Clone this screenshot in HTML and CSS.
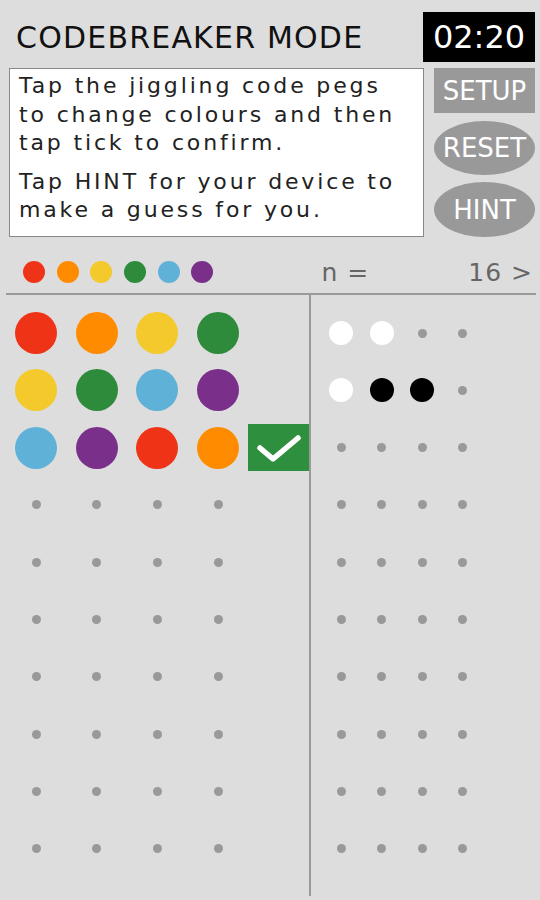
FILE: index.html
```html
<!DOCTYPE html>
<html lang="en">
<head>
    <meta charset="UTF-8">
    <meta name="viewport" content="width=device-width, initial-scale=1.0">
    <title>Codebreaker Mode</title>
    <link rel="stylesheet" href="styles.css">
</head>
<body>
    <div class="header">
        <h1 class="title">CODEBREAKER MODE</h1>
        <div class="timer">02:20</div>
    </div>

    <div class="info-row">
        <div class="info">
            <p>Tap the jiggling code pegs<br>to change colours and then<br>tap tick to confirm.</p>
            <p>Tap HINT for your device to<br>make a guess for you.</p>
        </div>
        <div class="buttons">
            <div class="btn setup">SETUP</div>
            <div class="btn oval reset">RESET</div>
            <div class="btn oval hint">HINT</div>
        </div>
    </div>

    <div class="palette-row">
        <div class="palette">
            <span class="dot r"></span>
            <span class="dot o"></span>
            <span class="dot y"></span>
            <span class="dot g"></span>
            <span class="dot b"></span>
            <span class="dot p"></span>
        </div>
        <span class="n-label">n =</span>
        <span class="n-value">16 &gt;</span>
    </div>

    <div class="divider"></div>

    <div class="board">
        <div class="guesses">
            <div class="grow"><span class="peg r"></span><span class="peg o"></span><span class="peg y"></span><span class="peg g"></span></div>
            <div class="grow"><span class="peg y"></span><span class="peg g"></span><span class="peg b"></span><span class="peg p"></span></div>
            <div class="grow">
                <span class="peg b"></span><span class="peg p"></span><span class="peg r"></span><span class="peg o"></span>
                <span class="tick">
                    <svg width="61" height="47" viewBox="0 0 61 47">
                        <polyline points="12,24 25,35 50,14" fill="none" stroke="#fff" stroke-width="5.5" stroke-linecap="round" stroke-linejoin="round"/>
                    </svg>
                </span>
            </div>
            <div class="grow"><span class="hole"></span><span class="hole"></span><span class="hole"></span><span class="hole"></span></div>
            <div class="grow"><span class="hole"></span><span class="hole"></span><span class="hole"></span><span class="hole"></span></div>
            <div class="grow"><span class="hole"></span><span class="hole"></span><span class="hole"></span><span class="hole"></span></div>
            <div class="grow"><span class="hole"></span><span class="hole"></span><span class="hole"></span><span class="hole"></span></div>
            <div class="grow"><span class="hole"></span><span class="hole"></span><span class="hole"></span><span class="hole"></span></div>
            <div class="grow"><span class="hole"></span><span class="hole"></span><span class="hole"></span><span class="hole"></span></div>
            <div class="grow"><span class="hole"></span><span class="hole"></span><span class="hole"></span><span class="hole"></span></div>
        </div>
        <div class="scores">
            <div class="srow"><span class="fb w"></span><span class="fb w"></span><span class="hole"></span><span class="hole"></span></div>
            <div class="srow"><span class="fb w"></span><span class="fb k"></span><span class="fb k"></span><span class="hole"></span></div>
            <div class="srow"><span class="hole"></span><span class="hole"></span><span class="hole"></span><span class="hole"></span></div>
            <div class="srow"><span class="hole"></span><span class="hole"></span><span class="hole"></span><span class="hole"></span></div>
            <div class="srow"><span class="hole"></span><span class="hole"></span><span class="hole"></span><span class="hole"></span></div>
            <div class="srow"><span class="hole"></span><span class="hole"></span><span class="hole"></span><span class="hole"></span></div>
            <div class="srow"><span class="hole"></span><span class="hole"></span><span class="hole"></span><span class="hole"></span></div>
            <div class="srow"><span class="hole"></span><span class="hole"></span><span class="hole"></span><span class="hole"></span></div>
            <div class="srow"><span class="hole"></span><span class="hole"></span><span class="hole"></span><span class="hole"></span></div>
            <div class="srow"><span class="hole"></span><span class="hole"></span><span class="hole"></span><span class="hole"></span></div>
        </div>
    </div>
</body>
</html>
```

FILE: styles.css
```css
body, html {
    margin: 0;
    padding: 0;
    height: 100%;
    overflow: hidden;
    background: #dddddd;
    font-family: "DejaVu Sans", Verdana, sans-serif;
    color: #1a1a1a;
}
.header {
    display: flex;
    justify-content: space-between;
    align-items: center;
    height: 50px;
    padding: 12px 5px 0 16px;
}
.title {
    margin: 0;
    font-size: 30px;
    font-weight: normal;
    letter-spacing: 1.2px;
    color: #111;
}
.timer {
    width: 112px;
    height: 50px;
    display: flex;
    align-items: center;
    justify-content: center;
    background: #000;
    color: #fff;
    font-size: 32px;
}
.info-row {
    display: flex;
    gap: 10px;
    height: 169px;
    margin-top: 6px;
    padding: 0 5px 0 9px;
}
.info {
    width: 415px;
    box-sizing: border-box;
    background: #fff;
    border: 1px solid #888;
    padding: 3px 6px 0 9px;
    font-size: 22px;
    line-height: 28.7px;
    letter-spacing: 2.85px;
    color: #222;
    white-space: nowrap;
}
.info p {
    margin: 0;
}
.info p + p {
    margin-top: 9.6px;
}
.buttons {
    width: 101px;
    display: flex;
    flex-direction: column;
    gap: 7.5px;
}
.btn {
    display: flex;
    align-items: center;
    justify-content: center;
    background: #999;
    color: #fff;
    font-size: 26px;
}
.setup { height: 45px; }
.reset { height: 54px; }
.hint  { height: 55px; }
.oval {
    border-radius: 50%;
}
.palette-row {
    display: flex;
    align-items: center;
    height: 42px;
    padding: 14px 7px 0 23px;
    color: #666;
    font-size: 25px;
}
.palette {
    display: flex;
    gap: 11.7px;
}
.dot {
    width: 22px;
    height: 22px;
    border-radius: 50%;
}
.n-label {
    margin-left: 108px;
    letter-spacing: 1px;
}
.n-value {
    margin-left: auto;
    letter-spacing: 1px;
}
.divider {
    height: 2px;
    margin: 0 4px 0 6px;
    background: #999;
}
.board {
    display: flex;
    height: 601px;
    margin: 0 4px 0 6px;
}
.guesses {
    width: 303px;
    padding-top: 9.4px;
    border-right: 2px solid #999;
}
.scores {
    padding-top: 9.4px;
    padding-left: 10px;
}
.grow {
    display: grid;
    grid-template-columns: repeat(4, 60.6px) 61px;
    height: 57.3px;
    align-items: center;
    justify-items: center;
}
.srow {
    display: grid;
    grid-template-columns: repeat(4, 40.5px);
    height: 57.3px;
    align-items: center;
    justify-items: center;
}
.peg {
    width: 42px;
    height: 42px;
    border-radius: 50%;
}
.hole {
    width: 9px;
    height: 9px;
    border-radius: 50%;
    background: #999;
}
.fb {
    width: 24px;
    height: 24px;
    border-radius: 50%;
}
.fb.w { background: #fff; }
.fb.k { background: #000; }
.tick {
    display: block;
    width: 61px;
    height: 47px;
    background: #2e8f3e;
}
.tick svg {
    display: block;
}
.r { background: #ef3316; }
.o { background: #ff8c00; }
.y { background: #f3c92b; }
.g { background: #2e8b3c; }
.b { background: #5fb1d7; }
.p { background: #7a2f8b; }
```
